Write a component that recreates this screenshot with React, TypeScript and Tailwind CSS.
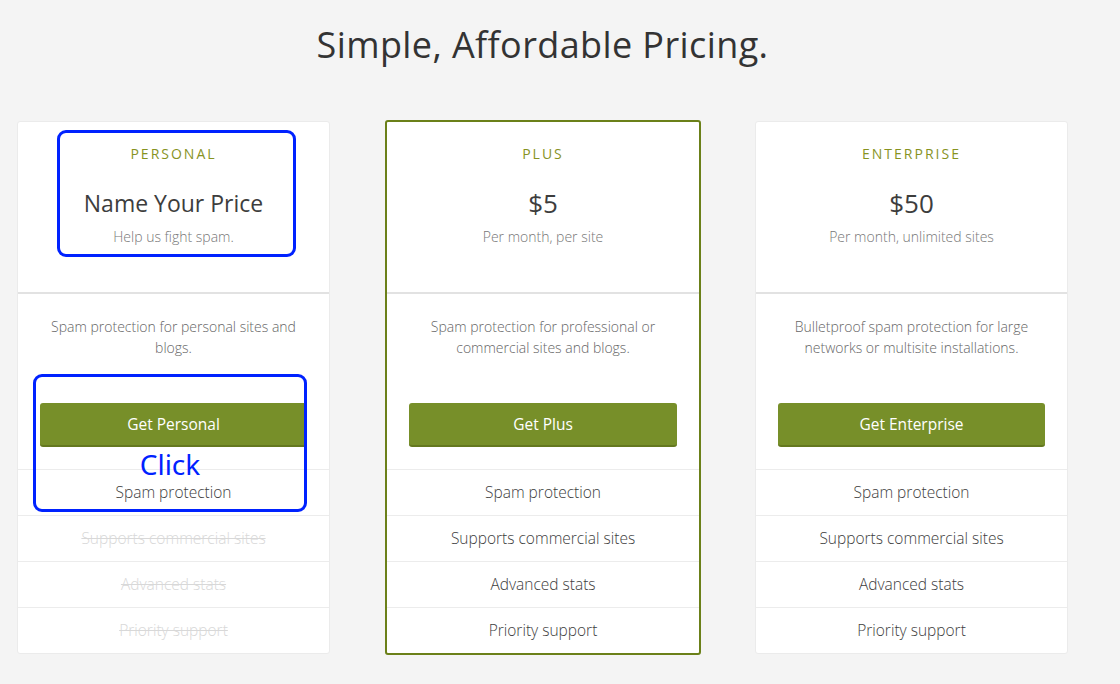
const plans = [
  {
    name: 'PERSONAL',
    price: 'Name Your Price',
    priceClass: 'text-[23px]',
    note: 'Help us fight spam.',
    desc: 'Spam protection for personal sites and blogs.',
    cta: 'Get Personal',
    features: [true, false, false, false],
  },
  {
    name: 'PLUS',
    price: '$5',
    priceClass: 'text-[26px]',
    note: 'Per month, per site',
    desc: 'Spam protection for professional or commercial sites and blogs.',
    cta: 'Get Plus',
    features: [true, true, true, true],
    featured: true,
  },
  {
    name: 'ENTERPRISE',
    price: '$50',
    priceClass: 'text-[26px]',
    note: 'Per month, unlimited sites',
    desc: 'Bulletproof spam protection for large networks or multisite installations.',
    cta: 'Get Enterprise',
    features: [true, true, true, true],
  },
]

const featureNames = ['Spam protection', 'Supports commercial sites', 'Advanced stats', 'Priority support']

type Plan = (typeof plans)[number]

function PlanCard({ plan }: { plan: Plan }) {
  return (
    <div
      className={`relative flex flex-col bg-white rounded-[3px] ${
        plan.featured ? 'w-[316px] border-2 border-[#6b8019] -mt-px' : 'w-[313px] border border-[#ebebeb]'
      }`}
    >
      <div className="h-[172px] flex flex-col items-center pt-[22px] border-b-2 border-[#e2e2e2]">
        <div className="text-[14px] tracking-[2px] text-[#87931f] leading-5">{plan.name}</div>
        <div className={`mt-[23px] ${plan.priceClass} text-[#3d3d3d] leading-8`}>{plan.price}</div>
        <div className="mt-[8px] text-[14px] font-light text-[#777] leading-5">{plan.note}</div>
      </div>
      <div className="h-[175px] flex flex-col px-[22px] pt-[22px]">
        <p className="text-[14px] font-light text-[#666] leading-[21px] text-center px-[10px]">{plan.desc}</p>
        <button className="mt-auto mb-[22px] pt-[2px] h-[44px] w-full rounded-[3px] bg-[#778f29] border-b-2 border-[#64781f] text-white text-[15.5px]">
          {plan.cta}
        </button>
      </div>
      <div className="flex flex-col">
        {featureNames.map((f, i) => (
          <div
            key={f}
            className={`h-[46px] flex items-center justify-center border-t border-[#ececec] text-[15.5px] font-light ${
              plan.features[i] ? 'text-[#3d3d3d]' : 'text-[#d8d8d8] line-through'
            }`}
          >
            {f}
          </div>
        ))}
      </div>
    </div>
  )
}

export default function App() {
  return (
    <div className="relative min-h-[684px] bg-[#f4f4f4] font-['Open_Sans',sans-serif] overflow-hidden">
      <div className="w-[1085px]">
        <h1 className="pt-[22px] text-center text-[36px] leading-[46px] text-[#333] tracking-[0.4px]">
          Simple, Affordable Pricing.
        </h1>
        <div className="mt-[53px] pl-[17px] flex items-start">
          <PlanCard plan={plans[0]} />
          <div className="ml-[55px]">
            <PlanCard plan={plans[1]} />
          </div>
          <div className="ml-[54px]">
            <PlanCard plan={plans[2]} />
          </div>
        </div>
      </div>

      <div className="absolute left-[57px] top-[130px] w-[239px] h-[127px] border-[3px] border-[#0022ff] rounded-[9px]" />
      <div className="absolute left-[33px] top-[374px] w-[274px] h-[138px] border-[3px] border-[#0022ff] rounded-[9px]" />
      <div className="absolute left-[33px] top-[445px] w-[274px] text-center text-[28px] leading-[38px] text-[#0022ff] font-['Noto_Sans',sans-serif]">
        Click
      </div>
    </div>
  )
}
